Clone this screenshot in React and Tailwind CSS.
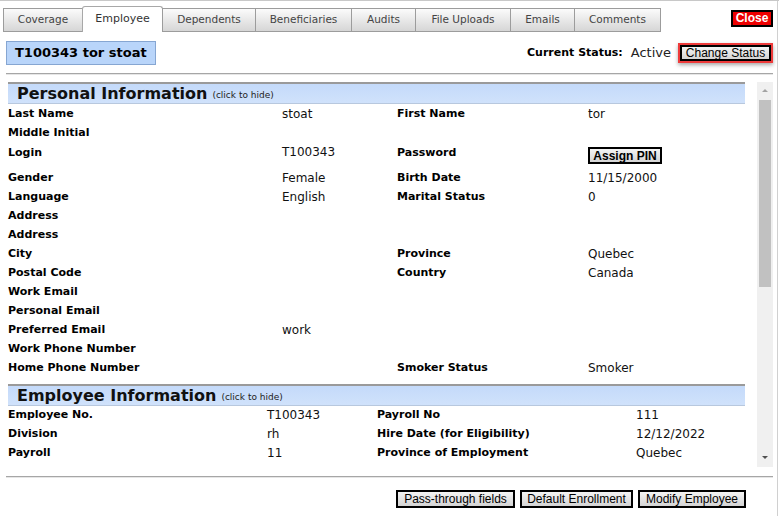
import React from 'react';

const tabs = ['Coverage', 'Employee', 'Dependents', 'Beneficiaries', 'Audits', 'File Uploads', 'Emails', 'Comments'];
const tabWidths = ['w-[80px]', 'w-[81px]', 'w-[94px]', 'w-[97px]', 'w-[65px]', 'w-[96px]', 'w-[65px]', 'w-[87px]'];

const personal = [
  ['Last Name', 'stoat', 'First Name', 'tor'],
  ['Middle Initial', '', '', ''],
  ['Login', 'T100343', 'Password', 'PIN'],
  ['Gender', 'Female', 'Birth Date', '11/15/2000'],
  ['Language', 'English', 'Marital Status', '0'],
  ['Address', '', '', ''],
  ['Address', '', '', ''],
  ['City', '', 'Province', 'Quebec'],
  ['Postal Code', '', 'Country', 'Canada'],
  ['Work Email', '', '', ''],
  ['Personal Email', '', '', ''],
  ['Preferred Email', 'work', '', ''],
  ['Work Phone Number', '', '', ''],
  ['Home Phone Number', '', 'Smoker Status', 'Smoker'],
];

const employee = [
  ['Employee No.', 'T100343', 'Payroll No', '111'],
  ['Division', 'rh', 'Hire Date (for Eligibility)', '12/12/2022'],
  ['Payroll', '11', 'Province of Employment', 'Quebec'],
  ['', 'CANADA', '', '0'],
];

function GrayButton({ children, className = '' }) {
  return (
    <button
      className={`border-2 border-black bg-gradient-to-b from-[#f4f4f4] to-[#d4d4d4] px-0 text-[12px] leading-[12px] text-black whitespace-nowrap font-['Liberation_Sans',Arial,sans-serif] ${className}`}
    >
      {children}
    </button>
  );
}

function SectionHeader({ title }) {
  return (
    <div className="h-[22px] border-t-2 border-[#9a9a9a] border-b border-b-[#b8c8de] bg-gradient-to-b from-[#c4dafa] to-[#d0e2fb] pl-[9px] flex items-end">
      <span className="text-[16px] font-bold leading-[19px] text-[#111]">{title}</span>
      <span className="ml-[5px] text-[9px] leading-[15px] text-[#222]">(click to hide)</span>
    </div>
  );
}

export default function App() {
  return (
    <div className="w-[779px] h-[516px] bg-white border-t border-[#c8c8c8] relative overflow-hidden whitespace-nowrap font-['DejaVu_Sans',Verdana,sans-serif] text-[#111]">
      <div className="absolute right-[1px] top-0 bottom-0 w-px bg-[#d0d0d0]" />
      {/* tabs */}
      <div className="flex items-end pl-[3px] pt-[5px] h-[31px]">
        {tabs.map((t, i) => (
          <div
            key={t}
            className={
              t === 'Employee'
                ? `${tabWidths[i]} h-[26px] bg-white border border-b-0 border-[#a8a8a8] rounded-t-[3px] -ml-px flex items-center justify-center text-[11px] text-[#333]`
                : `${tabWidths[i]} h-[24px] bg-gradient-to-b from-[#fbfbfb] to-[#d6d6d6] border border-[#9c9c9c] -ml-px first:ml-0 flex items-center justify-center text-[10.5px] text-[#444]`
            }
          >
            {t}
          </div>
        ))}
        <div className="ml-auto mr-[6px] self-start mt-[-1px]">
          <button className="w-[42px] h-[17px] bg-[#ee0000] border-2 border-black text-white font-bold text-[12px] leading-[12px] font-['Liberation_Sans',Arial,sans-serif]">
            Close
          </button>
        </div>
      </div>

      {/* id + status */}
      <div className="flex items-center justify-between pl-[6px] pr-[6px] mt-[9px] h-[24px]">
        <div className="w-[150px] h-[24px] bg-[#b9d5fa] border border-[#86a6d2] flex items-center pl-[8px] text-[13px] font-bold text-black">
          T100343 tor stoat
        </div>
        <div className="flex items-center">
          <span className="text-[11px] font-bold text-black">Current Status:</span>
          <span className="ml-[8px] text-[13px] text-[#222]">Active</span>
          <div className="ml-[7px] border-2 border-[#ee3b3b] shadow-[0_2px_4px_rgba(0,0,0,0.35)]">
            <GrayButton className="block h-[16px] w-[91px]">Change Status</GrayButton>
          </div>
        </div>
      </div>

      <div className="mx-[6px] mt-[8px] h-[2px] bg-[#a6a6a6] border-b border-[#e6e6e6]" />

      {/* scroll area */}
      <div className="mx-[6px] mt-[7px] h-[385px] flex">
        <div className="flex-1 pl-[2px] pr-[12px] overflow-hidden">
          <SectionHeader title="Personal Information" />
          <div className="grid grid-cols-[274px_115px_191px_1fr] pt-[1px]">
            {personal.map((r, i) => {
              const tall = r[0] === 'Login';
              const cls = tall ? 'h-[26px] flex items-start leading-[19px]' : 'h-[19px] flex items-center';
              return (
                <React.Fragment key={i}>
                  <div className={`${cls} text-[11px] font-bold text-black`}>{r[0]}</div>
                  <div className={`${cls} text-[12px] pb-[2px]`}>{r[1]}</div>
                  <div className={`${cls} text-[11px] font-bold text-black`}>{r[2]}</div>
                  <div className={`${cls} text-[12px] ${tall ? '' : 'pb-[2px]'}`}>
                    {r[3] === 'PIN' ? (
                      <GrayButton className="mt-[4px] h-[17px] w-[74px] font-bold">Assign PIN</GrayButton>
                    ) : (
                      r[3]
                    )}
                  </div>
                </React.Fragment>
              );
            })}
          </div>
          <div className="mt-[6px]">
            <SectionHeader title="Employee Information" />
          </div>
          <div className="grid grid-cols-[259px_110px_259px_1fr]">
            {employee.map((r, i) => (
              <React.Fragment key={i}>
                <div className="h-[19px] flex items-center text-[11px] font-bold text-black">{r[0]}</div>
                <div className="h-[19px] flex items-center text-[12px] pb-[2px]">{r[1]}</div>
                <div className="h-[19px] flex items-center text-[11px] font-bold text-black">{r[2]}</div>
                <div className="h-[19px] flex items-center text-[12px] pb-[2px]">{r[3]}</div>
              </React.Fragment>
            ))}
          </div>
        </div>
        {/* scrollbar */}
        <div className="w-[16px] bg-[#f0f0f0] flex flex-col items-center">
          <svg width="16" height="16" viewBox="0 0 16 16" className="shrink-0">
            <path d="M5 10 L8 7 L11 10 Z" fill="#a3a3a3" />
          </svg>
          <div className="w-[12px] h-[187px] bg-[#c1c1c1] mt-[2px]" />
          <div className="flex-1" />
          <svg width="16" height="16" viewBox="0 0 16 16" className="shrink-0 mb-[2px]">
            <path d="M5 7 L8 10 L11 7 Z" fill="#505050" />
          </svg>
        </div>
      </div>

      <div className="mx-[6px] mt-[9px] h-[2px] bg-[#a6a6a6] border-b border-[#e6e6e6]" />

      <div className="flex justify-end gap-[5px] pr-[33px] mt-[12px]">
        <GrayButton className="h-[18px] w-[119px]">Pass-through fields</GrayButton>
        <GrayButton className="h-[18px] w-[113px]">Default Enrollment</GrayButton>
        <GrayButton className="h-[18px] w-[108px]">Modify Employee</GrayButton>
      </div>
    </div>
  );
}
